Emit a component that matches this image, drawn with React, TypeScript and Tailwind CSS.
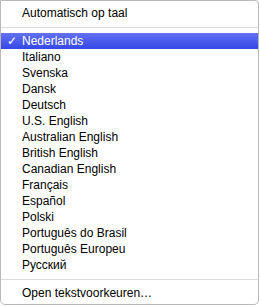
const languages = [
  "Nederlands",
  "Italiano",
  "Svenska",
  "Dansk",
  "Deutsch",
  "U.S. English",
  "Australian English",
  "British English",
  "Canadian English",
  "Français",
  "Español",
  "Polski",
  "Português do Brasil",
  "Português Europeu",
  "Русский",
];

const Separator = () => (
  <div className="h-[12px] flex items-center">
    <div className="h-px w-full bg-[#dcdcdc]" />
  </div>
);

const App = () => {
  return (
    <div className="w-[260px] h-[306px] bg-white">
      <div
        className="w-[259px] h-[305px] bg-white border border-[#b9b9b9] rounded-b-[5px] rounded-tr-[4px] pt-[4px] text-[12px] text-black leading-[16px]"
        style={{ fontFamily: '"Liberation Sans", Arial, sans-serif' }}
      >
        <div className="h-[16px] pl-[21px]">Automatisch op taal</div>
        <Separator />
        {languages.map((lang, i) => (
          <div
            key={lang}
            className={
              i === 0
                ? "relative h-[16px] pl-[21px] text-white bg-gradient-to-b from-[#6471f2] to-[#3547e6]"
                : "h-[16px] pl-[21px]"
            }
          >
            {i === 0 && <span className="absolute left-[6px] top-0">✓</span>}
            {lang}
          </div>
        ))}
        <Separator />
        <div className="h-[16px] pl-[21px]">Open tekstvoorkeuren…</div>
      </div>
    </div>
  );
};

export default App;
